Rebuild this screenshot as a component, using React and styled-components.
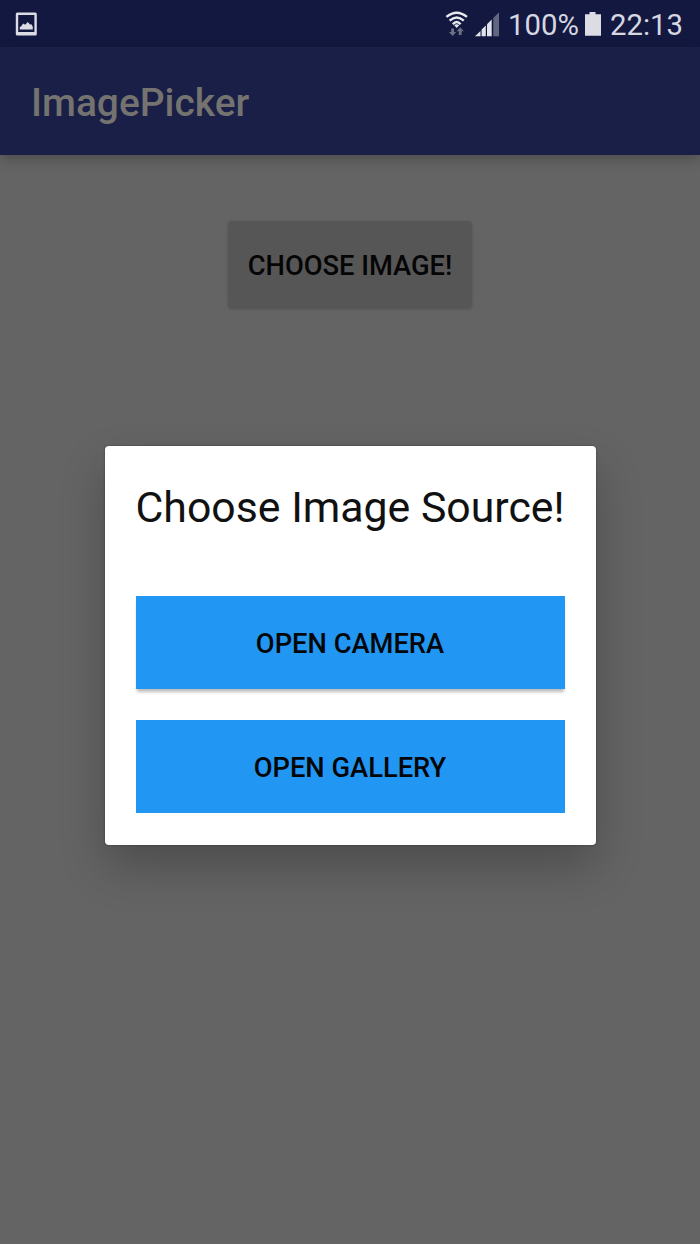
import React from "react";
import styled, { createGlobalStyle } from "styled-components";

const GlobalStyle = createGlobalStyle`
  * { box-sizing: border-box; }
  body { margin: 0; font-family: Roboto, "Liberation Sans", sans-serif; }
`;

const Screen = styled.div`
  position: relative;
  display: flex;
  flex-direction: column;
  width: 700px;
  height: 1244px;
  overflow: hidden;
  background: #646464;
`;

const StatusBar = styled.header`
  display: flex;
  align-items: center;
  justify-content: space-between;
  height: 47px;
  padding: 0 17px 0 15px;
  background: #131840;
`;

const StatusGroup = styled.div`
  display: flex;
  align-items: center;
`;

const StatusText = styled.span`
  width: ${(p) => p.$width};
  font-size: 29.3px;
  font-weight: 400;
  line-height: 48px;
  padding-top: 2px;
  color: #d6d7e0;
  white-space: nowrap;
`;

const Icon = styled.svg`
  display: block;
  flex: none;
  margin: ${(p) => p.$margin || "0"};
`;

const AppBar = styled.div`
  display: flex;
  align-items: center;
  height: 108px;
  padding: 4px 31px 0;
  background: #191f47;
  box-shadow: 0 4px 12px rgba(0, 0, 0, 0.24);
`;

const AppTitle = styled.h1`
  margin: 0;
  font-size: 38.9px;
  font-weight: 500;
  line-height: 48px;
  color: #74736f;
`;

const Content = styled.main`
  flex: 1;
  display: flex;
  justify-content: center;
  align-items: flex-start;
  padding-top: 66px;
`;

const Button = styled.button`
  display: flex;
  align-items: center;
  justify-content: center;
  border: 0;
  padding: 2px 0 0;
  font-family: inherit;
  font-size: 27.3px;
  font-weight: 500;
  line-height: 32px;
  text-transform: uppercase;
  white-space: nowrap;
`;

const ChooseButton = styled(Button)`
  width: 244px;
  height: 87px;
  border-radius: 4px;
  background: #565656;
  color: #050505;
  box-shadow: 0 1px 3px rgba(0, 0, 0, 0.2);
`;

const SourceButton = styled(Button)`
  width: 100%;
  height: 93px;
  background: #2196f3;
  color: #040608;
  box-shadow: ${(p) => (p.$raised ? "0 4px 3px -1px rgba(0, 0, 0, 0.26)" : "none")};
`;

const Overlay = styled.div`
  position: absolute;
  inset: 0;
  display: flex;
  justify-content: center;
  align-items: flex-start;
  padding-top: 445.5px;
`;

const Dialog = styled.section`
  display: flex;
  flex-direction: column;
  width: 491px;
  height: 399px;
  padding: 31px;
  border-radius: 4px;
  background: #fff;
  box-shadow: 0 22px 46px rgba(0, 0, 0, 0.23), 0 0 2px rgba(0, 0, 0, 0.45);
`;

const DialogTitle = styled.h2`
  margin: 0 0 58.5px;
  font-size: 42.8px;
  font-weight: 400;
  line-height: 61px;
  text-align: center;
  white-space: nowrap;
  color: #111;
`;

const ButtonStack = styled.div`
  display: flex;
  flex-direction: column;
  gap: 31px;
`;

const PictureIcon = () => (
  <Icon width="24" height="26" viewBox="0 0 24 26">
    <path fillRule="evenodd" fill="#dcdde4" d="M2.3 1.5h18A1.5 1.5 0 0 1 21.8 3v20a1.5 1.5 0 0 1-1.5 1.5h-18A1.5 1.5 0 0 1 .8 23V3a1.5 1.5 0 0 1 1.5-1.5zM3.2 4v17h16.2V4z" />
    <path fill="#dcdde4" d="M4.8 18.6V16l1.2-.6 2.2-3 2 1.4 2.6-2.9 2.2 2.6 1.4-.3 1.4 2.6v2.8z" />
  </Icon>
);

const WifiIcon = () => (
  <Icon width="24" height="28" viewBox="0 0 24 28" $margin="0 5px 0 0">
    <g fill="none" stroke="#e8e9ef" strokeWidth="2.4">
      <path d="M1.4 6.9Q11.7 -1.5 22 6.9" />
      <path d="M4.6 10.7Q11.7 4.4 18.8 10.7" />
      <path d="M7.8 14.2Q11.7 9.8 15.6 14.2" />
    </g>
    <path fill="#e8e9ef" d="M9.2 15.2Q11.7 13.2 14.2 15.2L11.7 18z" />
    <g fill="#6c7084">
      <path d="M6.2 18.4h2.8v3.6h2.2L7.6 26 4 22h2.2z" />
      <path d="M13.8 25h2.8v-3.8h2.2L15.2 17.2 11.6 21.2h2.2z" />
    </g>
  </Icon>
);

const SignalIcon = () => (
  <Icon width="26" height="26" viewBox="0 0 26 26" $margin="0 8px 0 0">
    <g fill="#e2e3ea">
      <path d="M1 25.2L6.5 19.9V25.2z" />
      <path d="M7.6 25.2V18.6L11.8 14.4V25.2z" />
      <path d="M13 25.2V13.2L17.7 8.5V25.2z" />
    </g>
    <path fill="#626780" d="M19.3 25.2V6.9L25 1.2V25.2z" />
  </Icon>
);

const BatteryIcon = () => (
  <Icon width="18" height="25" viewBox="0 0 18 25" $margin="0 8px 0 5px">
    <path fill="#dcdde4" d="M5.5 1h6v2.2H17V24.7H1V3.2h4.5z" />
  </Icon>
);

export default function App() {
  return (
    <>
      <GlobalStyle />
      <Screen>
        <StatusBar>
          <PictureIcon />
          <StatusGroup>
            <WifiIcon />
            <SignalIcon />
            <StatusText $width="71px">100%</StatusText>
            <BatteryIcon />
            <StatusText $width="73px">22:13</StatusText>
          </StatusGroup>
        </StatusBar>
        <AppBar>
          <AppTitle>ImagePicker</AppTitle>
        </AppBar>
        <Content>
          <ChooseButton>Choose Image!</ChooseButton>
        </Content>
        <Overlay>
          <Dialog role="dialog">
            <DialogTitle>Choose Image Source!</DialogTitle>
            <ButtonStack>
              <SourceButton $raised>Open Camera</SourceButton>
              <SourceButton>Open Gallery</SourceButton>
            </ButtonStack>
          </Dialog>
        </Overlay>
      </Screen>
    </>
  );
}
